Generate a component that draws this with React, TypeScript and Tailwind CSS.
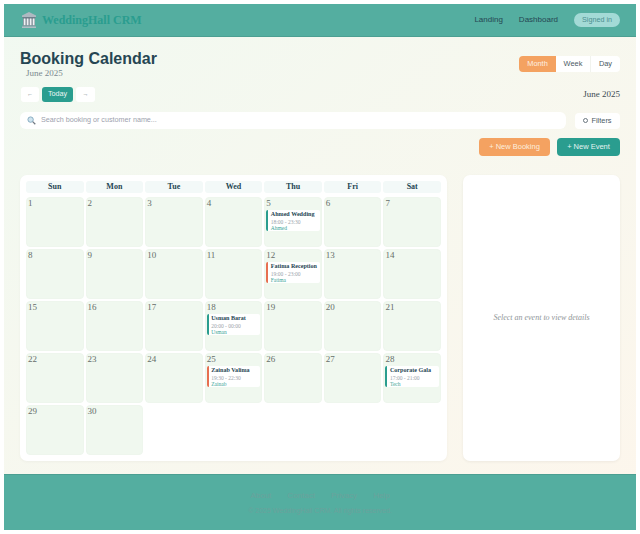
import React from "react";

const days = ["Sun", "Mon", "Tue", "Wed", "Thu", "Fri", "Sat"];
const serif = "font-['Liberation_Serif',serif]";
const sans = "font-['Liberation_Sans',sans-serif]";

type Ev = { title: string; time: string; who: string; bar: string };
const events: Record<number, Ev> = {
  5: { title: "Ahmed Wedding", time: "18:00 - 23:30", who: "Ahmed", bar: "border-[#2a9d8f]" },
  12: { title: "Fatima Reception", time: "19:00 - 23:00", who: "Fatima", bar: "border-[#e76f51]" },
  18: { title: "Usman Barat", time: "20:00 - 00:00", who: "Usman", bar: "border-[#2a9d8f]" },
  25: { title: "Zainab Valima", time: "19:30 - 22:30", who: "Zainab", bar: "border-[#e76f51]" },
  28: { title: "Corporate Gala", time: "17:00 - 21:00", who: "Tech", bar: "border-[#2a9d8f]" },
};

function Cell({ d }: { d: number }) {
  const e = events[d];
  return (
    <div className="h-[50px] rounded-[4px] bg-[#f0f8ef] border border-[#eef6ed] px-[1px] overflow-hidden">
      <div className="text-[9px] leading-[11px] text-[#666e6a]">{d}</div>
      {e && (
        <div className={`mt-[1px] h-[21px] rounded-[2px] bg-white border-l-2 ${e.bar} pl-[2.5px] overflow-hidden`}>
          <div className="text-[6.1px] leading-[8px] font-bold text-[#264653] whitespace-nowrap">{e.title}</div>
          <div className="mt-[1px] text-[5.5px] leading-[6px] text-[#9aa3aa] whitespace-nowrap">{e.time}</div>
          <div className="text-[5.5px] leading-[6px] text-[#3aa597] whitespace-nowrap">{e.who}</div>
        </div>
      )}
    </div>
  );
}

export default function App() {
  return (
    <div className={`w-[640px] h-[534px] bg-white p-1 overflow-hidden ${sans}`}>
      <div className="w-[632px] h-[526px] flex flex-col bg-gradient-to-br from-[#f1f9f1] to-[#fdf6ec]">
        <header className="h-[33px] shrink-0 bg-[#54aea0] border-b border-[#4c9f92] flex items-center justify-between pl-[18px] pr-[16px]">
          <div className="flex items-center gap-[6px]">
            <svg width="14" height="16" viewBox="0 0 14 16" className="shrink-0">
              <path d="M7 0 L14 3.6 V5 H0 V3.6 Z" fill="#aeb9c1" />
              <rect x="0.5" y="5" width="13" height="1" fill="#6f7f8b" />
              <rect x="1" y="6" width="12" height="7.5" fill="#5b6b78" />
              <rect x="1.6" y="6.4" width="2" height="7" fill="#eef2f4" />
              <rect x="4.6" y="6.4" width="2" height="7" fill="#eef2f4" />
              <rect x="7.6" y="6.4" width="2" height="7" fill="#eef2f4" />
              <rect x="10.6" y="6.4" width="2" height="7" fill="#eef2f4" />
              <rect x="0.5" y="13.4" width="13" height="1.1" fill="#8d9aa5" />
              <rect x="0" y="14.5" width="14" height="1.5" fill="#b3bdc5" />
            </svg>
            <span className={`${serif} text-[12px] font-bold text-[#2a9d8f]`}>WeddingHall CRM</span>
          </div>
          <nav className="flex items-center gap-[16px] text-[8px] text-[#264653]">
            <span>Landing</span>
            <span>Dashboard</span>
            <span className="h-[14px] w-[46px] rounded-full bg-[#a3dad6] flex items-center justify-center text-[7.2px] text-[#4d8f90]">Signed in</span>
          </nav>
        </header>

        <main className="flex-1 flex flex-col px-[16px] min-h-0">
          <div className="flex items-start justify-between pt-[13px]">
            <div>
              <h1 className="text-[16px] leading-[17px] font-bold text-[#264653]">Booking Calendar</h1>
              <div className={`${serif} text-[9px] leading-[12px] text-[#7b8a8f] pl-[6px]`}>June 2025</div>
            </div>
            <div className="flex mt-[6px] h-[16px] text-[7.4px] text-[#4a5a63] rounded-[4px] overflow-hidden">
              <span className="w-[37px] bg-[#f4a261] text-[#fdf0e3] flex items-center justify-center">Month</span>
              <span className="w-[35px] bg-white border-r border-[#f1f3ee] flex items-center justify-center">Week</span>
              <span className="w-[29px] bg-white flex items-center justify-center">Day</span>
            </div>
          </div>

          <div className="flex items-center justify-between mt-[8px] h-[15px]">
            <div className="flex items-center gap-[3px] ml-[1px]">
              <span className="w-[18px] h-[15px] bg-white rounded-[3px] flex items-center justify-center text-[6px] text-[#6b7780]">←</span>
              <span className="w-[31px] h-[15px] bg-[#2a9d8f] rounded-[3px] flex items-center justify-center text-[7.2px] text-[#e9f5f3]">Today</span>
              <span className="w-[19px] h-[15px] bg-white rounded-[3px] flex items-center justify-center text-[6px] text-[#6b7780]">→</span>
            </div>
            <span className={`${serif} text-[9px] text-[#3c4c54]`}>June 2025</span>
          </div>

          <div className="flex items-center justify-between mt-[10px] h-[17px]">
            <div className="w-[546px] h-[17px] bg-white rounded-[6px] flex items-center pl-[7px] gap-[5px]">
              <svg width="9" height="9" viewBox="0 0 10 10" className="shrink-0">
                <circle cx="4" cy="4" r="3" fill="#cfe3ee" stroke="#7fa6bd" strokeWidth="1" />
                <path d="M6.3 6.3 L9.2 9.2" stroke="#6f7780" strokeWidth="1.4" />
              </svg>
              <span className="text-[7.2px] text-[#9d9fae]">Search booking or customer name...</span>
            </div>
            <div className="w-[45px] h-[16px] bg-white rounded-[4px] flex items-center justify-center gap-[3px] text-[7.4px] text-[#4a5a63]">
              <span className="w-[5px] h-[5px] rounded-full border border-[#6b7780]" />
              Filters
            </div>
          </div>

          <div className="flex justify-end gap-[7px] mt-[9px]">
            <span className="w-[71px] h-[18px] bg-[#f4a261] rounded-[4px] flex items-center justify-center text-[7.5px] text-[#fdeede]">+ New Booking</span>
            <span className="w-[63px] h-[18px] bg-[#2a9d8f] rounded-[4px] flex items-center justify-center text-[7.5px] text-[#e4f3f1]">+ New Event</span>
          </div>

          <div className="flex gap-[16px] mt-[19px]">
            <section className={`${serif} w-[427px] h-[286px] bg-white rounded-[7px] shadow-[0_1px_3px_rgba(0,0,0,0.04)] px-[6px] pt-[6px]`}>
              <div className="grid grid-cols-7 gap-[2px]">
                {days.map((d) => (
                  <div key={d} className="h-[12px] rounded-[3px] bg-[#f3f9f8] flex items-center justify-center text-[8px] font-bold text-[#264653]">{d}</div>
                ))}
              </div>
              <div className="grid grid-cols-7 gap-[2px] mt-[4px]">
                {Array.from({ length: 30 }, (_, i) => (
                  <Cell key={i} d={i + 1} />
                ))}
              </div>
            </section>
            <aside className="w-[157px] h-[286px] bg-white rounded-[7px] shadow-[0_1px_3px_rgba(0,0,0,0.06)] flex items-center justify-center">
              <span className={`${serif} italic text-[8px] text-[#8f9598]`}>Select an event to view details</span>
            </aside>
          </div>
        </main>

        <footer className="h-[56px] shrink-0 bg-[#54aea0] border-t border-[#4c9f92] flex flex-col items-center pt-[15px]">
          <div className="flex gap-[16px] text-[8px] leading-[12px] text-[#6aa29c]">
            <span>About</span>
            <span>Contact</span>
            <span>Privacy</span>
            <span>Help</span>
          </div>
          <div className="text-[7px] leading-[12px] mt-[3px] text-[#6aa29c]">© 2025 WeddingHall CRM. All rights reserved.</div>
        </footer>
      </div>
    </div>
  );
}
